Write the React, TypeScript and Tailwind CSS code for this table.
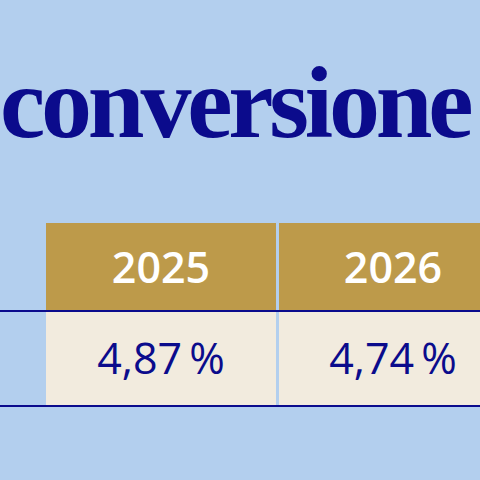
import React from "react";

export default function App() {
  return (
    <div className="w-[480px] h-[480px] overflow-hidden bg-[#b3cfee] relative">
      <div className="h-[223px] pt-[52px] whitespace-nowrap">
        <div
          className="text-[#0b0b8c] font-bold leading-none"
          style={{ fontFamily: '"Liberation Serif", serif', fontSize: 102, letterSpacing: "-4.2px" }}
        >
          conversione
        </div>
      </div>
      <div className="w-[600px]" style={{ fontFamily: '"Open Sans", sans-serif' }}>
        <div className="flex h-[87px]">
          <div className="w-[46px] shrink-0" />
          <div className="w-[230px] shrink-0 bg-[#bd9a4a] flex items-center justify-center text-white font-semibold text-[43px] pt-[1px]">
            2025
          </div>
          <div className="w-[3px] shrink-0" />
          <div className="w-[228px] shrink-0 bg-[#bd9a4a] flex items-center justify-center text-white font-semibold text-[43px] pt-[1px]">
            2026
          </div>
        </div>
        <div className="h-[2px] bg-[#0b0b8c]" />
        <div className="flex h-[93px]">
          <div className="w-[46px] shrink-0" />
          <div className="w-[230px] shrink-0 bg-[#f2ebde] flex items-center justify-center text-[#0b0b8c] text-[43px]">
            4,87&#8201;%
          </div>
          <div className="w-[3px] shrink-0" />
          <div className="w-[228px] shrink-0 bg-[#f2ebde] flex items-center justify-center text-[#0b0b8c] text-[43px]">
            4,74&#8201;%
          </div>
        </div>
        <div className="h-[2px] bg-[#0b0b8c]" />
      </div>
    </div>
  );
}
